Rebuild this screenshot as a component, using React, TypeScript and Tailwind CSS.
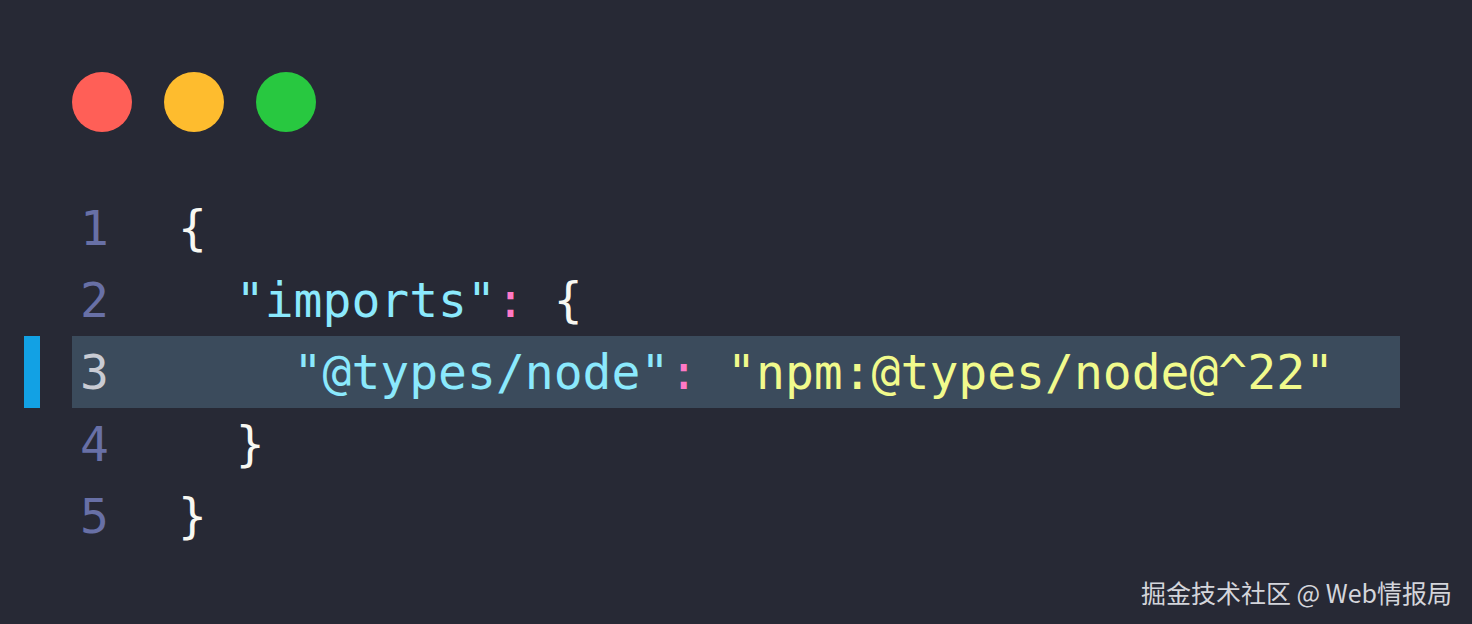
const mono = "font-['DejaVu_Sans_Mono','Liberation_Mono',monospace]";

type Tok = { t: string; c: string };

const C = {
  plain: "text-[#f8f8f2]",
  key: "text-[#8be9fd]",
  colon: "text-[#ff79c6]",
  str: "text-[#f1fa8c]",
};

const lines: Tok[][] = [
  [{ t: "{", c: C.plain }],
  [
    { t: "  ", c: C.plain },
    { t: '"imports"', c: C.key },
    { t: ":", c: C.colon },
    { t: " {", c: C.plain },
  ],
  [
    { t: "    ", c: C.plain },
    { t: '"@types/node"', c: C.key },
    { t: ":", c: C.colon },
    { t: " ", c: C.plain },
    { t: '"npm:@types/node@^22"', c: C.str },
  ],
  [{ t: "  }", c: C.plain }],
  [{ t: "}", c: C.plain }],
];

const active = 2;

export default function App() {
  return (
    <div className="w-[1472px] h-[624px] bg-[#272935] flex flex-col overflow-hidden">
      <div className="flex gap-8 pl-[72px] pt-[72px]">
        <span className="w-[60px] h-[60px] rounded-full bg-[#ff5f57]" />
        <span className="w-[60px] h-[60px] rounded-full bg-[#febc2e]" />
        <span className="w-[60px] h-[60px] rounded-full bg-[#28c840]" />
      </div>

      <div className={`mt-[60px] flex flex-col ${mono} text-[48px] leading-[72px]`}>
        {lines.map((toks, i) => {
          const isActive = i === active;
          return (
            <div key={i} className="flex h-[72px]">
              <div className="w-[72px] pl-6 flex">
                {isActive && <span className="w-4 h-full bg-[#12a1e4]" />}
              </div>
              <div
                className={`w-[1328px] flex whitespace-pre ${
                  isActive ? "bg-[#3b4b5c]" : ""
                }`}
              >
                <span
                  className={`w-[106px] pl-2 ${
                    isActive ? "text-[#c9cbd3]" : "text-[#6870a6]"
                  }`}
                >
                  {i + 1}
                </span>
                <span>
                  {toks.map((tk, j) => (
                    <span key={j} className={tk.c}>
                      {tk.t}
                    </span>
                  ))}
                </span>
              </div>
            </div>
          );
        })}
      </div>

      <div className="flex justify-end pr-5 mt-[23px]">
        <span className="font-['Noto_Sans_CJK_SC','Noto_Sans',sans-serif] text-[25px] leading-[34px] text-[#d4d5db]">
          掘金技术社区 @ Web情报局
        </span>
      </div>
    </div>
  );
}
